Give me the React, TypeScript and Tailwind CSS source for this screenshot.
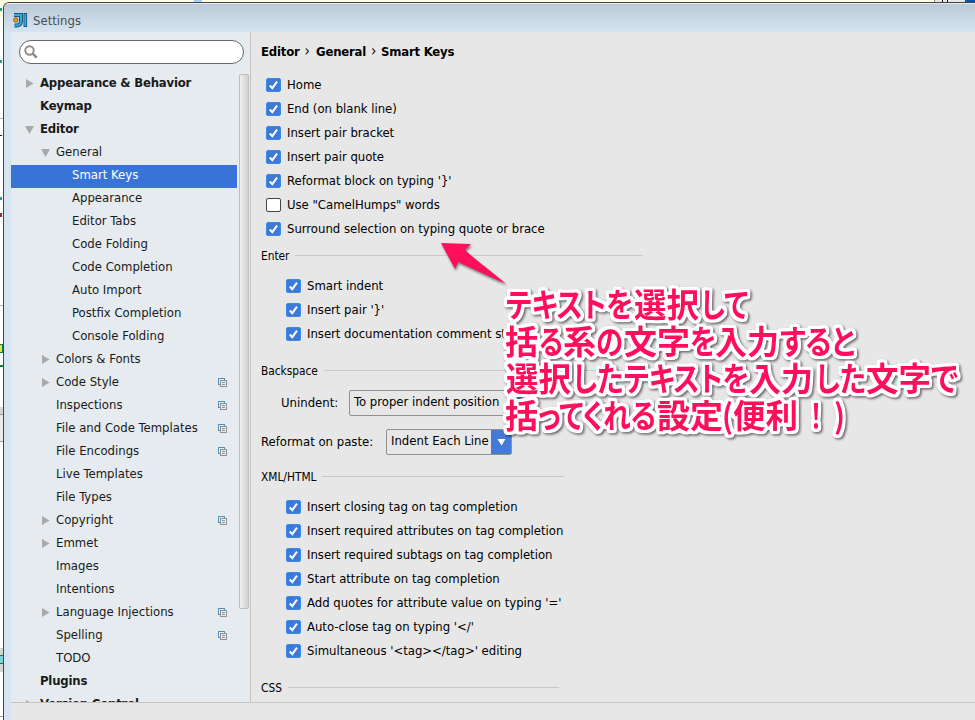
import React from 'react';
import { clsx } from 'clsx';

interface TreeNode {
  label: string;
  level: number;
  arrow?: 'right' | 'down';
  project?: boolean;
}

const nodes: TreeNode[] = [
  { label: 'Appearance & Behavior', level: 0, arrow: 'right' },
  { label: 'Keymap', level: 0 },
  { label: 'Editor', level: 0, arrow: 'down' },
  { label: 'General', level: 1, arrow: 'down' },
  { label: 'Smart Keys', level: 2 },
  { label: 'Appearance', level: 2 },
  { label: 'Editor Tabs', level: 2 },
  { label: 'Code Folding', level: 2 },
  { label: 'Code Completion', level: 2 },
  { label: 'Auto Import', level: 2 },
  { label: 'Postfix Completion', level: 2 },
  { label: 'Console Folding', level: 2 },
  { label: 'Colors & Fonts', level: 1, arrow: 'right' },
  { label: 'Code Style', level: 1, arrow: 'right', project: true },
  { label: 'Inspections', level: 1, project: true },
  { label: 'File and Code Templates', level: 1, project: true },
  { label: 'File Encodings', level: 1, project: true },
  { label: 'Live Templates', level: 1 },
  { label: 'File Types', level: 1 },
  { label: 'Copyright', level: 1, arrow: 'right', project: true },
  { label: 'Emmet', level: 1, arrow: 'right' },
  { label: 'Images', level: 1 },
  { label: 'Intentions', level: 1 },
  { label: 'Language Injections', level: 1, arrow: 'right', project: true },
  { label: 'Spelling', level: 1, project: true },
  { label: 'TODO', level: 1 },
  { label: 'Plugins', level: 0 },
  { label: 'Version Control', level: 0, arrow: 'right' },
];

// [text, x, width] runs of each line of the note; kana is set narrower than kanji
const noteLines: [string, number, number][][] = [
  [['テキストを', 506, 127], ['選択', 634, 65], ['して', 701, 47]],
  [['括', 505, 33], ['る', 539, 24], ['系', 563, 33], ['の', 596, 27], ['文字', 624, 66], ['を', 690, 26], ['入力', 715, 64], ['すると', 780, 75]],
  [['選択', 506, 65], ['したテキストを', 573, 176], ['入力', 749, 64], ['した', 816, 50], ['文字', 866, 65], ['で', 931, 27]],
  [['括', 505, 33], ['ってくれる', 538, 118], ['設定', 657, 66], ['(', 722, 11], ['便利', 733, 65], ['！', 810, 12], [')', 834, 11]],
];

const Logo: React.FC = () => (
  <svg width="15" height="15" viewBox="0 0 15 15">
    <path d="M1 2h7v6.500a4 4 0 0 1-4 4H1.500" fill="none" stroke="#17587f" strokeWidth="4" />
    <path d="M12.300 0v14" stroke="#17587f" strokeWidth="3.600" />
    <path d="M1 2h7v6.500a4 4 0 0 1-4 4H1.500" fill="none" stroke="#3fa6da" strokeWidth="2" />
    <path d="M12.300 1v12" stroke="#3fa6da" strokeWidth="1.800" />
    <circle cx="2.800" cy="7" r="2.200" fill="#f29a1e" stroke="#7b4a12" strokeWidth=".8" />
  </svg>
);

const SearchIcon: React.FC = () => (
  <svg width="14" height="14" viewBox="0 0 14 14" fill="none" stroke="#8c8c8c">
    <circle cx="5.500" cy="5.500" r="4.200" strokeWidth="2" />
    <path d="M8.700 8.700l4 4" strokeWidth="2.600" />
  </svg>
);

const ProjectIcon: React.FC = () => (
  <svg width="9" height="9" viewBox="0 0 9 9" fill="none" shapeRendering="crispEdges">
    <path d="M2.500 6.500h-2v-6h6v2" stroke="#4f94b8" />
    <path d="M2.500 2.500h6v6h-6z" stroke="#8f9397" />
    <path d="M4 4.500h3M4 6.500h3" stroke="#8f9397" />
  </svg>
);

const Arrow: React.FC<{ dir: 'right' | 'down' }> = ({ dir }) => (
  <svg width="9" height="9" viewBox="0 0 9 9" fill="#a9a9a9">
    <path d={dir === 'right' ? 'M1 0l7.500 4.500L1 9z' : 'M0 1h9L4.500 9z'} />
  </svg>
);

const TreeRow: React.FC<{ node: TreeNode }> = ({ node }) => (
  <div
    className={clsx(
      'flex h-[23px] w-[226px] shrink-0 items-center whitespace-pre',
      node.level === 0 && 'pl-[14px] font-bold tracking-[-0.2px]',
      node.level === 1 && 'pl-[30px]',
      node.level === 2 && 'pl-[46px]',
      node.label === 'Smart Keys' ? 'bg-[#3874d8] text-white' : 'text-[#1a1a1a]',
    )}
  >
    <span className="-mt-0.5 w-[15px] shrink-0">{node.arrow && <Arrow dir={node.arrow} />}</span>
    <span className="-mt-1">{node.label}</span>
    {node.project && (
      <span className="-mt-0.5 mr-[10px] ml-auto">
        <ProjectIcon />
      </span>
    )}
  </div>
);

const Check: React.FC<{ label: string; off?: boolean }> = ({ label, off }) => (
  <div className="flex h-6 items-center gap-1.5 tracking-[-0.02px] whitespace-pre">
    <span
      className={clsx(
        'flex h-[14px] w-[15px] items-center justify-center rounded-[2px] border',
        off ? 'border-[#444] bg-white' : 'border-[#3a8ae8] bg-[#3d79d6]',
      )}
    >
      {!off && (
        <svg width="9" height="9" viewBox="0 0 9 9" fill="none" stroke="#fff" strokeWidth="2">
          <path d="M.8 4.500L3.300 7.200 8 .6" />
        </svg>
      )}
    </span>
    <span>{label}</span>
  </div>
);

const Section: React.FC<{ title: string; className: string }> = ({ title, className }) => (
  <div className={clsx('flex h-4 items-center gap-1.5 text-[11.8px]', className)}>
    <span className="mt-0.5">{title}</span>
    <span className="-mt-0.5 h-px flex-1 bg-[#c9c9c9]" />
  </div>
);

const Combo: React.FC<{ value: string; className: string }> = ({ value, className }) => (
  <div className={clsx('flex h-[26px] overflow-hidden rounded-[2px] border border-[#919191] whitespace-pre', className)}>
    <span className="flex-1 pl-1 leading-[22px]">{value}</span>
    <span className="-my-px -mr-px flex w-[21px] items-center justify-center bg-[#447ad6]">
      <svg width="9" height="7" viewBox="0 0 9 7" fill="#fff">
        <path d="M.5 0h8l-4 6.500z" />
      </svg>
    </span>
  </div>
);

const Note: React.FC = () => (
  <svg className="absolute top-0 left-0" width="975" height="720" fill="#ff0f5b">
    <defs>
      <filter id="outline" x="490" y="275" width="485" height="175" filterUnits="userSpaceOnUse" colorInterpolationFilters="sRGB">
        <feMorphology in="SourceAlpha" operator="dilate" radius="2" result="fat" />
        <feGaussianBlur in="fat" stdDeviation="1" result="soft" />
        <feComponentTransfer in="soft" result="edge">
          <feFuncA type="linear" slope="5" intercept="-.3" />
        </feComponentTransfer>
        <feFlood floodColor="#fff" />
        <feComposite in2="edge" operator="in" result="white" />
        <feDropShadow in="white" dx="1.500" dy="1.500" stdDeviation="1.200" floodColor="#000" floodOpacity=".55" result="halo" />
        <feMerge>
          <feMergeNode in="halo" />
          <feMergeNode in="SourceGraphic" />
        </feMerge>
      </filter>
    </defs>
    <path
      className="drop-shadow-[1px_2px_1px_rgba(0,0,0,.45)]"
      d="M441 243l30 1-6 6c8 8 24 19 41 34-17-8-33-15-48-22l-3 7z"
    />
    <g filter="url(#outline)" className="font-['Noto_Sans_CJK_JP',sans-serif] text-[33px] font-bold [font-feature-settings:'palt']">
      {noteLines.map((runs, i) => (
        <text key={i} y={316.8 + i * 37.2}>
          {runs.map(([text, x, width]) => (
            <tspan key={x} x={x} textLength={width} lengthAdjust="spacingAndGlyphs">
              {text}
            </tspan>
          ))}
        </text>
      ))}
    </g>
  </svg>
);

// sliver of the editor window that shows left of the dialog
const EditorEdge: React.FC = () => (
  <div className="flex w-[3px] shrink-0 flex-col bg-white">
    <div className="h-[17px] bg-[#ffffe4] pt-[8px]">
      <div className="h-[3px] w-0.5 bg-[#1f9c95]" />
    </div>
    <div className="mt-[43px] h-[3px] w-0.5 bg-[#1f9c95]" />
    <div className="mt-[55px] h-px bg-[#b5b5b5]" />
    <div className="mt-4 h-px w-0.5 bg-[#222]" />
    <div className="mt-[61px] h-[3px] w-0.5 bg-[#1f9c95]" />
    <div className="mt-[13px] h-1 w-0.5 bg-[#8f2740]" />
    <div className="mt-[88px] h-px bg-[#b5b5b5]" />
    <div className="mt-[38px] h-[9px] border-y border-r border-[#108038] bg-[#d9e25c]" />
    <div className="mt-3 h-0.5 bg-[#108038]" />
    <div className="mt-10 h-[8px] border-b border-[#999] bg-[#d5d5d5]" />
    <div className="h-[27px] border-b border-[#999] bg-[#ebebeb]" />
    <div className="mt-[206px] h-6 bg-[#d5d5d5] pt-[7px]">
      <div className="h-[9px] border-y border-[#108038] bg-[#7fd3e0]" />
    </div>
    <div className="mt-[44px] h-px bg-[#999]" />
  </div>
);

const App: React.FC = () => (
  <div className="relative flex h-[720px] w-[975px] overflow-hidden font-['DejaVu_Sans_Condensed','DejaVu_Sans',sans-serif] text-[13px] text-black">
    <EditorEdge />
    <div className="flex flex-1 flex-col bg-[#ffffe4]">
      <div className="flex h-[2px] shrink-0 justify-end">
        <div className="mr-[732px] w-2 bg-[#a5cdf5]" />
        <div className="flex w-[31px] border-l border-[#888] bg-[#e7e7e7] pl-[7px]">
          <div className="w-[6px] border-x border-black" />
        </div>
        <div className="w-[10px] bg-[#0a54b0]" />
      </div>
      <div className="flex flex-1 flex-col overflow-hidden rounded-tl-[6px] border-t border-l border-[#444] bg-[#d6e4f1]">
        <header className="flex h-[29px] shrink-0 items-center gap-[5px] border-t border-[#e4ebf2] bg-linear-to-b from-[#bccad8] to-[#d6e4f1] pt-[5px] pl-[9px]">
          <Logo />
          <span className="text-[#4a4f55]">Settings</span>
        </header>
        <div className="ml-[7px] flex h-[670px] shrink-0">
          <aside className="flex w-[240px] shrink-0 flex-col overflow-hidden border-r border-[#c3c3c3] bg-[#e5ebef]">
            <div className="mt-2 ml-2 flex h-6 w-[225px] shrink-0 items-center rounded-full border border-[#666] bg-white pl-1">
              <SearchIcon />
            </div>
            <div className="mt-[9px] flex min-h-0 flex-1 justify-between overflow-hidden">
              <div className="flex flex-col">
                {nodes.map((n) => (
                  <TreeRow key={n.label} node={n} />
                ))}
              </div>
              <div className="mt-px mr-px h-[535px] w-[10px] rounded-[2px] border border-[#bdbdbd] bg-linear-to-r from-[#f1f1f1] to-[#d0d0d0]" />
            </div>
          </aside>
          <main className="flex-1 bg-[#e7e7e7] pl-[10px]">
            <h1 className="flex h-[39px] items-center font-bold tracking-[-0.2px]">
              <span className="w-[55px]">
                Editor<span className="pl-[5px] text-[15px] leading-none font-normal">›</span>
              </span>
              <span className="w-[65px]">
                General<span className="pl-[5px] text-[15px] leading-none font-normal">›</span>
              </span>
              <span>Smart Keys</span>
            </h1>
            <div className="mt-0.5 pl-[5px]">
              <Check label="Home" />
              <Check label="End (on blank line)" />
              <Check label="Insert pair bracket" />
              <Check label="Insert pair quote" />
              <Check label="Reformat block on typing '}'" />
              <Check label={'Use "CamelHumps" words'} off />
              <Check label="Surround selection on typing quote or brace" />
            </div>
            <Section title="Enter" className="mt-[7px] w-[382px]" />
            <div className="mt-[10px] pl-[25px]">
              <Check label="Smart indent" />
              <Check label="Insert pair '}'" />
              <Check label="Insert documentation comment stub" />
            </div>
            <Section title="Backspace" className="mt-[17px] w-[382px]" />
            <div className="mt-[11px] flex items-center pl-5">
              <span className="w-[68px]">Unindent:</span>
              <Combo value="To proper indent position" className="w-[182px]" />
            </div>
            <div className="mt-[13px] flex items-center">
              <span className="w-[125px]">Reformat on paste:</span>
              <Combo value="Indent Each Line" className="w-[126px]" />
            </div>
            <Section title="XML/HTML" className="mt-[14px] w-[303px]" />
            <div className="mt-[10px] pl-[25px]">
              <Check label="Insert closing tag on tag completion" />
              <Check label="Insert required attributes on tag completion" />
              <Check label="Insert required subtags on tag completion" />
              <Check label="Start attribute on tag completion" />
              <Check label="Add quotes for attribute value on typing '='" />
              <Check label="Auto-close tag on typing '</'" />
              <Check label="Simultaneous '<tag></tag>' editing" />
            </div>
            <Section title="CSS" className="mt-[17px] w-[298px]" />
          </main>
        </div>
        <footer className="ml-[7px] flex-1 border-t border-[#c3c3c3] bg-[#e7e7e7]" />
      </div>
    </div>
    <Note />
  </div>
);

export default App;
